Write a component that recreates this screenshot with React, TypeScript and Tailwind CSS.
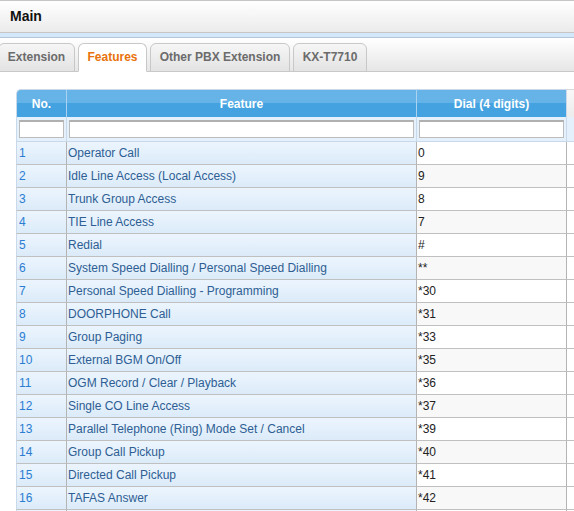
import React from 'react';

const rows: [string, string, string][] = [
  ['1', 'Operator Call', '0'],
  ['2', 'Idle Line Access (Local Access)', '9'],
  ['3', 'Trunk Group Access', '8'],
  ['4', 'TIE Line Access', '7'],
  ['5', 'Redial', '#'],
  ['6', 'System Speed Dialling / Personal Speed Dialling', '**'],
  ['7', 'Personal Speed Dialling - Programming', '*30'],
  ['8', 'DOORPHONE Call', '*31'],
  ['9', 'Group Paging', '*33'],
  ['10', 'External BGM On/Off', '*35'],
  ['11', 'OGM Record / Clear / Playback', '*36'],
  ['12', 'Single CO Line Access', '*37'],
  ['13', 'Parallel Telephone (Ring) Mode Set / Cancel', '*39'],
  ['14', 'Group Call Pickup', '*40'],
  ['15', 'Directed Call Pickup', '*41'],
  ['16', 'TAFAS Answer', '*42'],
  ['', '', ''],
];

const tabs = [
  { label: 'Extension', w: 'w-[77px] -ml-[2px]' },
  { label: 'Features', w: 'w-[69px]', active: true },
  { label: 'Other PBX Extension', w: 'w-[140px]' },
  { label: 'KX-T7710', w: 'w-[74px]' },
];

export default function App() {
  return (
    <div className="w-[574px] h-[511px] overflow-hidden bg-white font-['Liberation_Sans',Arial,sans-serif]">
      {/* Title bar */}
      <div className="h-[33px] border-t border-b border-[#c6c6c6] bg-gradient-to-b from-white to-[#ebebeb] flex items-center pl-[10px]">
        <span className="text-[14px] font-bold text-[#111]">Main</span>
      </div>
      <div className="h-[5px] bg-[#d5e8fb] border-b border-[#b4c6d8]" />

      {/* Tabs */}
      <div className="h-[34px] bg-gradient-to-b from-white to-[#e6e6e6] border-b border-[#c8c8c8] flex items-end gap-[3px] pt-[5px]">
        {tabs.map((t) => (
          <div
            key={t.label}
            className={`${t.w} h-[29px] -mb-px pb-[2px] rounded-t-[6px] border border-[#c8c8c8] flex items-center justify-center text-[12px] font-bold ${
              t.active
                ? 'bg-white border-b-white text-[#e8720c]'
                : 'bg-gradient-to-b from-[#f6f6f6] to-[#e3e3e3] text-[#6b6b6b]'
            }`}
          >
            {t.label}
          </div>
        ))}
      </div>

      {/* Table */}
      <div className="pl-[16px] pt-[17px]">
        <table className="table-fixed border-separate border-spacing-0 text-[12px] w-[600px]">
          <colgroup>
            <col className="w-[51px]" />
            <col className="w-[350px]" />
            <col className="w-[150px]" />
            <col className="w-[49px]" />
          </colgroup>
          <thead>
            <tr className="h-[28px]">
              <th className="rounded-tl-[5px] border-t border-l border-[#c9d9e9] bg-gradient-to-b from-[#66b3e7] from-50% to-[#44a2e0] to-50% text-white font-bold border-r border-r-[#a9d3f1]">
                No.
              </th>
              <th className="border-t border-[#c9d9e9] bg-gradient-to-b from-[#66b3e7] from-50% to-[#44a2e0] to-50% text-white font-bold border-r border-r-[#a9d3f1]">
                Feature
              </th>
              <th className="border-t border-[#c9d9e9] bg-gradient-to-b from-[#66b3e7] from-50% to-[#44a2e0] to-50% text-white font-bold border-r border-r-[#c9d9e9]">
                Dial (4 digits)
              </th>
              <th className="border-t border-[#d8d8d8] bg-gradient-to-b from-[#f8f8f8] to-[#ececec]" />
            </tr>
          </thead>
          <tbody>
            <tr className="h-[25px] bg-[#e4f0fb]">
              <td className="border-l border-b border-[#c9d9e9] px-[2px] border-r border-r-[#c9d9e9]">
                <div className="h-[18px] bg-white border border-[#bcbcbc] border-t-2 border-t-[#b0b0b0]" />
              </td>
              <td className="border-b border-[#c9d9e9] px-[2px] border-r border-r-[#c9d9e9]">
                <div className="h-[18px] bg-white border border-[#bcbcbc] border-t-2 border-t-[#b0b0b0]" />
              </td>
              <td className="border-b border-[#c9d9e9] px-[2px] border-r border-r-[#c9d9e9]">
                <div className="h-[18px] bg-white border border-[#bcbcbc] border-t-2 border-t-[#b0b0b0]" />
              </td>
              <td className="border-b border-[#c9d9e9]" />
            </tr>
            {rows.map(([no, feature, dial], i) => (
              <tr key={i} className="h-[23px]">
                <td className="border-l border-[#c9d9e9] border-b border-b-[#c0c0c0] border-r border-r-[#b4b4b4] border-r-dotted bg-gradient-to-b from-[#ecf5fe] to-[#dcebf9] pl-[2px] text-[#2a7dd2] truncate">
                  {no}
                </td>
                <td className="border-b border-b-[#c0c0c0] border-r border-r-[#b4b4b4] border-r-dotted bg-gradient-to-b from-[#ecf5fe] to-[#dcebf9] pl-[1px] text-[#2e5e93] truncate">
                  {feature}
                </td>
                <td
                  className={`border-b border-b-[#c0c0c0] border-r border-r-[#b4b4b4] border-r-dotted pl-[1px] text-[#222] ${
                    i % 2 === 0 ? 'bg-white' : 'bg-[#f8f8f8]'
                  }`}
                >
                  {dial}
                </td>
                <td className="border-b border-b-[#c0c0c0] bg-white" />
              </tr>
            ))}
          </tbody>
        </table>
      </div>
    </div>
  );
}
